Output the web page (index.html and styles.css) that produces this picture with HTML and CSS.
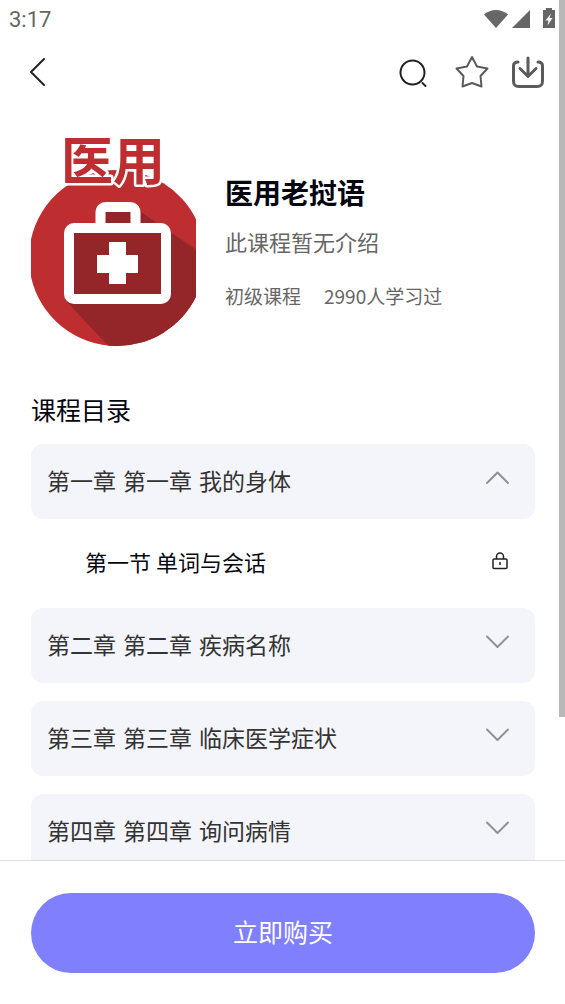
FILE: index.html
```html
<!DOCTYPE html>
<html lang="zh-CN">
<head>
<meta charset="utf-8">
<meta name="viewport" content="width=device-width, initial-scale=1">
<title>医用老挝语</title>
<link rel="stylesheet" href="styles.css">
</head>
<body>
<div class="app">
  <div class="status-bar">
    <span class="clock">3:17</span>
    <svg class="status-icons" width="72" height="20" viewBox="0 0 72 20" aria-hidden="true">
      <path d="M0 4.500C7-1.500 17-1.500 24 4.500L12 18z"/>
      <path d="M46 0v18H28z"/>
      <path fill-rule="evenodd" d="M62-2h6v2h3v18H59V0h3zM67 3.500L61.500 10.500H64.500L63.500 15.500 68.500 8H65.500z"/>
    </svg>
  </div>

  <header class="nav">
    <button class="icon-btn" aria-label="返回">
      <svg width="20" height="32" viewBox="0 0 20 32"><path class="line dark" d="M16 3L3 16l13 13"/></svg>
    </button>
    <div class="nav-actions">
      <button class="icon-btn" aria-label="搜索">
        <svg width="36" height="34" viewBox="0 0 36 34"><circle class="line dark" cx="15.500" cy="17.500" r="12"/><path class="line dark" d="M25.500 28l3 3"/></svg>
      </button>
      <button class="icon-btn" aria-label="收藏">
        <svg width="34" height="34" viewBox="0 0 34 34"><path class="line gray" d="M17 2l5 9.500 10.500 2-7 7.500 1 10.500L17 28l-9.500 3.500L8.500 21 1.500 13.500 12 11.500z"/></svg>
      </button>
      <button class="icon-btn" aria-label="下载">
        <svg width="34" height="34" viewBox="0 0 34 34"><path class="line gray bold" d="M7 7C3.500 7 2.500 8.500 2.500 11v15c0 4 1.500 5.500 5.500 5.500h18c4 0 5.500-1.500 5.500-5.500V11c0-2.500-1-4-4.500-4M17 3v18M9 13.500l8 8 8-8"/></svg>
      </button>
    </div>
  </header>

  <main class="content">
    <section class="course">
      <svg class="cover" viewBox="0 0 165 220" role="img" aria-label="医用">
        <defs>
          <clipPath id="frame"><rect width="165" height="220"/></clipPath>
          <clipPath id="disc" clip-path="url(#frame)"><circle cx="86" cy="126" r="88"/></clipPath>
        </defs>
        <g clip-path="url(#disc)">
          <path class="red" d="M-5 30h180v190H-5z"/>
          <path class="shade" d="M107 78L170 121v100H84L36 170z"/>
        </g>
        <path class="shade" d="M70 75h34v20h31v71H38V95h32z"/>
        <rect class="case" x="38" y="96" width="97" height="71" rx="5"/>
        <path class="case" d="M69.500 95V81q0-6 6-6h23q6 0 6 6v14"/>
        <path class="cross" d="M78 110h17v13h12v18H95v11H78v-11H66v-18h12z"/>
        <text class="cover-text" x="30" y="48">医用</text>
      </svg>
      <div class="course-info">
        <h1 class="course-title">医用老挝语</h1>
        <p class="course-desc">此课程暂无介绍</p>
        <div class="course-meta"><span>初级课程</span><span>2990人学习过</span></div>
      </div>
    </section>

    <h2 class="list-title">课程目录</h2>
    <div class="chapters">
      <section>
        <button class="chapter" aria-expanded="true">
          <span class="chapter-name"><span>第一章</span> <span>第一章</span> <span>我的身体</span></span>
          <svg class="chevron" width="26" height="20" viewBox="0 0 26 20"><path d="M3 13L13.500 2.500 24 13"/></svg>
        </button>
        <a class="lesson" href="#lesson-1"><span>第一节 单词与会话</span>
          <svg class="lock" width="16" height="20" viewBox="0 0 16 20"><rect x="1" y="8" width="14" height="9.500" rx="1"/><path d="M4.500 8V5.500a3.500 3.500 0 0 1 7 0V8M8 11v3"/></svg></a>
      </section>
      <button class="chapter" aria-expanded="false">
        <span class="chapter-name"><span>第二章</span> <span>第二章</span> <span>疾病名称</span></span>
        <svg class="chevron" width="26" height="20" viewBox="0 0 26 20"><path d="M3 2.500L13.500 13 24 2.500"/></svg>
      </button>
      <button class="chapter" aria-expanded="false">
        <span class="chapter-name"><span>第三章</span> <span>第三章</span> <span>临床医学症状</span></span>
        <svg class="chevron" width="26" height="20" viewBox="0 0 26 20"><path d="M3 2.500L13.500 13 24 2.500"/></svg>
      </button>
      <button class="chapter" aria-expanded="false">
        <span class="chapter-name"><span>第四章</span> <span>第四章</span> <span>询问病情</span></span>
        <svg class="chevron" width="26" height="20" viewBox="0 0 26 20"><path d="M3 2.500L13.500 13 24 2.500"/></svg>
      </button>
    </div>
  </main>

  <footer class="buy-bar"><button class="buy-btn">立即购买</button></footer>
  <div class="scroll-thumb"></div>
</div>
</body>
</html>
```

FILE: styles.css
```css
* { box-sizing: border-box; }

body {
  margin: 0;
  background: #fff;
  color: #05060f;
  font-family: "Noto Sans CJK SC", sans-serif;
}

h1, h2, p { margin: 0; }

button {
  border: 0;
  font: inherit;
  cursor: pointer;
}

svg { display: block; flex: none; }

.app {
  position: relative;
  display: flex;
  flex-direction: column;
  height: 100vh;
  overflow: hidden;
}

.status-bar {
  display: flex;
  align-items: center;
  justify-content: space-between;
  height: 40px;
  padding: 0 9px;
  flex: none;
}

.clock {
  color: #666;
  font: 400 22px/24px Roboto, sans-serif;
}

.status-icons { fill: #666; overflow: visible; }

.nav {
  display: flex;
  align-items: center;
  justify-content: space-between;
  height: 64px;
  padding: 0 20px 0 28px;
  flex: none;
}

.nav-actions { display: flex; gap: 22px; }

.icon-btn { padding: 0; background: none; }

.line {
  fill: none;
  stroke-width: 2;
  stroke-linecap: round;
  stroke-linejoin: round;
}

.dark { stroke: #222; }
.gray { stroke: #5a5a5a; }
.bold { stroke-width: 3; }

.content {
  flex: 1;
  min-height: 0;
  overflow: hidden;
  padding: 28px 30px 0 31px;
}

.course { display: flex; gap: 29px; }

.cover { width: 165px; height: 220px; overflow: visible; }

.red { fill: #be2d30; }
.shade { fill: #942629; }
.case { fill: none; stroke: #fff; stroke-width: 10; }
.cross { fill: #fff; }

.cover-text {
  fill: #be2d30;
  stroke: #fff;
  stroke-width: 5;
  stroke-linejoin: round;
  paint-order: stroke;
  font-size: 52px;
  font-weight: 700;
}

.course-info { flex: 1; padding-top: 40px; }

.course-title {
  font-size: 28px;
  line-height: 40px;
  font-weight: 700;
}

.course-desc {
  margin-top: 13px;
  color: #666;
  font-size: 22px;
  line-height: 32px;
}

.course-meta {
  display: flex;
  gap: 23px;
  margin-top: 25px;
  color: #666;
  font-size: 19px;
  line-height: 28px;
}

.list-title {
  margin-top: 39px;
  font-size: 25px;
  line-height: 36px;
  font-weight: 400;
}

.chapters {
  display: flex;
  flex-direction: column;
  gap: 18px;
  margin-top: 17px;
}

/* The open chapter's lesson row replaces the gap below it. */
.chapters > section { margin-bottom: -18px; }

.chapter {
  display: flex;
  align-items: center;
  justify-content: space-between;
  width: 100%;
  height: 75px;
  flex: none;
  padding: 0 25px 3px 16px;
  border-radius: 12px;
  background: #f4f5fa;
  color: #333;
  font-size: 23px;
  text-align: left;
}

.chapter-name { display: flex; gap: 7px; }

.chevron {
  fill: none;
  stroke: #909196;
  stroke-width: 2;
  stroke-linecap: round;
  stroke-linejoin: round;
}

.lesson {
  display: flex;
  align-items: center;
  justify-content: space-between;
  height: 89px;
  padding: 0 27px 6px 54px;
  color: #05060f;
  font-size: 22px;
  text-decoration: none;
}

.lock { fill: none; stroke: #222; stroke-width: 1.5; }

.buy-bar {
  flex: none;
  padding: 32px 30px 31px 31px;
  border-top: 1px solid #ddd;
  background: #fff;
}

.buy-btn {
  display: block;
  width: 100%;
  height: 80px;
  padding: 0 0 4px;
  border-radius: 40px;
  background: #8080ff;
  color: #fff;
  font-size: 25px;
}

.scroll-thumb {
  position: absolute;
  top: 0;
  right: 0;
  width: 6px;
  height: 717px;
  background: #b8b8b8;
}
```
